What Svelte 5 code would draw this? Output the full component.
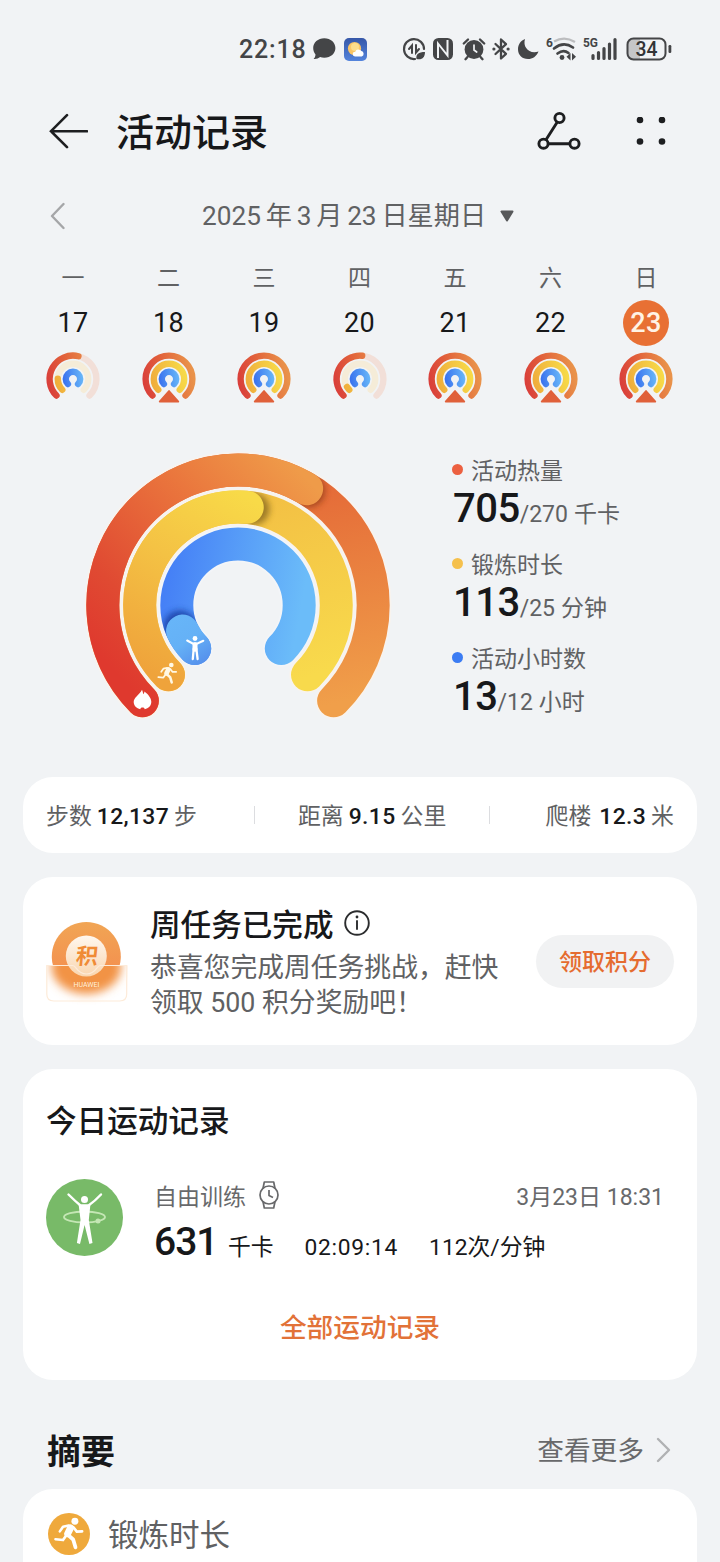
<script lang="ts">
  type Day = { label: string; date: number; heat: number; time: number; done: boolean; today?: boolean };

  const days: Day[] = [
    { label: '一', date: 17, heat: 0.55, time: 0.17, done: false },
    { label: '二', date: 18, heat: 1, time: 1, done: true },
    { label: '三', date: 19, heat: 1, time: 1, done: true },
    { label: '四', date: 20, heat: 0.52, time: 0.05, done: false },
    { label: '五', date: 21, heat: 1, time: 1, done: true },
    { label: '六', date: 22, heat: 1, time: 1, done: true },
    { label: '日', date: 23, heat: 1, time: 1, done: true, today: true }
  ];

  const goals = [
    { name: '活动热量', value: '705', target: '/270', unit: '千卡', color: '#ec6040' },
    { name: '锻炼时长', value: '113', target: '/25', unit: '分钟', color: '#f5c04c' },
    { name: '活动小时数', value: '13', target: '/12', unit: '小时', color: '#3b7cf3' }
  ];

  // 圆环从左下 45° 开始,顺时针 270°
  function arc(cx: number, cy: number, r: number, progress: number) {
    const start = (135 * Math.PI) / 180;
    const end = start + progress * 1.5 * Math.PI;
    const point = (a: number) => `${(cx + r * Math.cos(a)).toFixed(2)} ${(cy + r * Math.sin(a)).toFixed(2)}`;
    return `M${point(start)} A${r} ${r} 0 ${progress > 2 / 3 ? 1 : 0} 1 ${point(end)}`;
  }
</script>

{#snippet runner()}
  <circle cx="15.8" cy="3.6" r="2.4" fill="currentColor" />
  <path d="m12.8 8.200-2 4" stroke="currentColor" stroke-width="4.800" stroke-linecap="round" />
  <path d="m11 13 3.600 3.200 1.600 5.400" fill="none" stroke="currentColor" stroke-width="2.600" stroke-linecap="round" stroke-linejoin="round" />
  <path d="M11.500 6.600 7.600 7.400 5.400 10.600M14.800 7.800l2.300 3 3.700-.2M9.800 13.400 7.600 16.600 2.400 16" fill="none" stroke="currentColor" stroke-width="1.800" stroke-linecap="round" stroke-linejoin="round" />
{/snippet}

<main class="screen">
  <div class="status-bar">
    <span class="clock">22:18</span>
    <svg width="24" height="24" viewBox="0 0 24 24"><path d="M12.3 1.2C18.7 1.2 23.4 5.6 23.4 11S18.7 20.8 12.3 20.8c-1.6 0-3-.2-4.2-.7C6.4 21.3 4 22.5 1.6 22c1.3-1.3 1.8-3 1.9-4.6C2 15.7 1.2 13.5 1.2 11 1.2 5.6 5.9 1.2 12.3 1.2z" fill="#444547" /></svg>
    <svg class="s-weather" width="23" height="23" viewBox="0 0 23 23">
      <defs><linearGradient id="sky" x2="0" y2="1"><stop stop-color="#3657a8" /><stop offset="1" stop-color="#5484dc" /></linearGradient></defs>
      <rect width="23" height="23" rx="5" fill="url(#sky)" />
      <circle cx="10.5" cy="10.5" r="6.6" fill="#fbc667" />
      <circle cx="11" cy="9" r="4" fill="#fddd8c" />
      <path d="M11 18.5a2.4 2.4 0 0 1 .2-4.8 3.6 3.6 0 0 1 6.2-.6 2.8 2.8 0 0 1 .3 5.4z" fill="#fff" />
    </svg>
    <div class="status-right">
      <svg width="24" height="24" viewBox="0 0 24 24" fill="none" stroke="#444547" stroke-width="2.2" stroke-linecap="round">
        <path d="M13 22A10 10 0 1 1 22 12" />
        <path d="M10 16V8.5L7 12M14 8v7.500l3-3.500" stroke-width="2" />
        <path d="M14.5 22c-1-4.500 2-7 8.500-7 0 5-3 8.500-8.500 7z" fill="#444547" stroke="none" />
      </svg>
      <svg class="s-nfc" width="20" height="22" viewBox="0 0 20 22"><rect width="20" height="22" rx="5.5" fill="#444547" /><path d="M5 20V5.500l9.500 12V2" fill="none" stroke="#f1f3f5" stroke-width="2" /></svg>
      <svg class="s-alarm" width="24" height="24" viewBox="0 0 24 24" fill="none" stroke-linecap="round">
        <circle cx="12" cy="12.5" r="9.4" fill="#444547" />
        <path d="M1.800 6.500 6 2.500M22.200 6.500l-4.200-4M5.500 20 3.500 22.200M18.500 20l2 2.200" stroke="#444547" stroke-width="2.400" />
        <path d="M12 8v5l2.700 2" stroke="#f1f3f5" stroke-width="1.700" />
      </svg>
      <svg class="s-bt" width="18" height="24" viewBox="0 0 18 24">
        <path d="m3.500 7 10.500 9.800-5 4.700v-19l5 4.700L3.500 17" fill="none" stroke="#444547" stroke-width="2.3" stroke-linejoin="round" stroke-linecap="round" />
        <circle cx="1.9" cy="12" r="1.6" fill="#444547" /><circle cx="16.1" cy="12" r="1.6" fill="#444547" />
      </svg>
      <svg class="s-moon" width="22" height="22" viewBox="0 0 22 22"><path d="M8 1C5.500 9 12 16.500 21.500 13.500 19.500 18.500 15.500 21 11 21 5 21 1 16.800 1 11.200 1 6.300 4 2.500 8 1z" fill="#444547" /></svg>
      <svg class="s-wifi" width="31" height="24" viewBox="0 0 31 24">
        <text x="0" y="10" font-size="12" font-weight="700" fill="#444547">6</text>
        <path d="M8 4.500Q18.500-1.500 29 5" fill="none" stroke="#bcbdbf" stroke-width="2.3" />
        <path d="M8 11.500Q17.500 4 27 10.500M11.500 16.500q6-4.500 11-.5" fill="none" stroke="#444547" stroke-width="2.7" stroke-linecap="round" />
        <circle cx="16" cy="20.5" r="2.4" fill="#444547" />
        <path d="M24.500 16v7.500l-4-3.700zM26 16v7.500l4-3.700z" fill="#444547" />
      </svg>
      <svg class="s-cell" width="34" height="24" viewBox="0 0 34 24">
        <text x="0" y="10" font-size="13" font-weight="700" fill="#444547" textLength="15" lengthAdjust="spacingAndGlyphs">5G</text>
        <path d="M10 18.500v3M15.500 15.500v6M21 11.500v10M26.500 7v14.500M32 2.500v19" stroke="#444547" stroke-width="3.2" stroke-linecap="round" />
      </svg>
      <svg class="s-battery" width="46" height="24" viewBox="0 0 46 24">
        <path d="M7 2h7v20H7a5 5 0 0 1-5-5V7a5 5 0 0 1 5-5z" fill="#c5c6c8" />
        <rect x="1.5" y="1.5" width="38" height="21" rx="6" fill="none" stroke="#444547" stroke-width="2" />
        <rect x="42.5" y="8" width="2.8" height="8" rx="1.2" fill="#444547" />
        <text x="20.5" y="18.7" font-size="19.5" font-weight="500" fill="#333436" text-anchor="middle" textLength="22" lengthAdjust="spacingAndGlyphs">34</text>
      </svg>
    </div>
  </div>

  <header class="header">
    <button class="icon-button" aria-label="返回">
      <svg width="40" height="38" viewBox="0 0 40 38"><path d="M19 2.200 3 18.200l16 16M3 18.200H39" fill="none" stroke="#1d1e20" stroke-width="2.6" stroke-linecap="round" /></svg>
    </button>
    <h1>活动记录</h1>
    <button class="icon-button share" aria-label="分享">
      <svg width="44" height="42" viewBox="0 0 44 42" fill="none" stroke="#1d1e20" stroke-width="2.9"><circle cx="22.5" cy="7" r="4.6" /><circle cx="6.5" cy="32.7" r="4.6" /><circle cx="37.5" cy="32.7" r="4.6" /><path d="M20 11.500 9 28.700M11.500 32.700H33" /></svg>
    </button>
    <button class="icon-button" aria-label="更多">
      <svg width="30" height="30" viewBox="0 0 30 30" fill="#1d1e20"><circle cx="4" cy="3" r="3.3" /><circle cx="26" cy="3" r="3.3" /><circle cx="4" cy="24.5" r="3.3" /><circle cx="26" cy="24.5" r="3.3" /></svg>
    </button>
  </header>

  <div class="date-row">
    <svg width="16" height="28" viewBox="0 0 16 28"><path d="M14.500 2 3 14l11.500 12" fill="none" stroke="#a5a6a8" stroke-width="2.4" stroke-linecap="round" stroke-linejoin="round" /></svg>
    <span class="date">2025 年 3 月 23 日星期日</span>
    <svg class="caret" width="16" height="13" viewBox="0 0 16 13"><path d="M2.500 1.500h11L8 10.500z" fill="#58595b" stroke="#58595b" stroke-width="2" stroke-linejoin="round" /></svg>
  </div>

  <div class="week">
    {#each days as day}
      <div class="day">
        <span class="day-label">{day.label}</span>
        <span class="day-date" class:today={day.today}>{day.date}</span>
        <svg width="56" height="54" viewBox="0 0 56 54" fill="none" stroke-linecap="round">
          <g stroke-width="6.4">
            {#if !day.done}
              <path d={arc(28, 28, 23.4, 1)} stroke="#f2dfd8" />
              <path d={arc(28, 28, 15.2, 1)} stroke="#f5ecd8" />
            {/if}
            <path d={arc(28, 28, 23.4, day.heat)} stroke="url(#miniHeat)" />
            <path d={arc(28, 28, 15.2, day.time)} stroke="url(#miniTime)" />
            <path d={arc(28, 28, 7.2, 1)} stroke="url(#miniHour)" />
          </g>
          {#if day.done}
            <path d="M28 41 38 50.500H18z" fill="#f1f3f5" stroke="#f1f3f5" stroke-width="5" stroke-linejoin="round" />
            <path d="M28 40 37.300 50.500H18.700z" fill="#e0603a" stroke="#e0603a" stroke-width="1.8" stroke-linejoin="round" />
          {/if}
        </svg>
      </div>
    {/each}
  </div>

  <section class="activity">
    <svg class="rings" width="310" height="274" viewBox="0 0 310 274" fill="none" stroke-linecap="round">
      <defs>
        <linearGradient id="miniHeat" gradientUnits="userSpaceOnUse" x1="2" y1="46" x2="54" y2="34"><stop stop-color="#d8393a" /><stop offset=".5" stop-color="#e2633b" /><stop offset="1" stop-color="#e9924a" /></linearGradient>
        <linearGradient id="miniTime" gradientUnits="userSpaceOnUse" x1="10" y1="38" x2="46" y2="30"><stop stop-color="#efaa3b" /><stop offset="1" stop-color="#f7da48" /></linearGradient>
        <linearGradient id="miniHour" gradientUnits="userSpaceOnUse" x1="18" y1="30" x2="38" y2="28"><stop stop-color="#3971ee" /><stop offset="1" stop-color="#67b6f8" /></linearGradient>
        <linearGradient id="heatBase" gradientUnits="userSpaceOnUse" x1="225" y1="40" x2="270" y2="250"><stop stop-color="#e56b38" /><stop offset="1" stop-color="#f09f4a" /></linearGradient>
        <linearGradient id="heatTop" gradientUnits="userSpaceOnUse" x1="40" y1="230" x2="235" y2="40"><stop stop-color="#df392e" /><stop offset=".22" stop-color="#e04a32" /><stop offset=".65" stop-color="#ea763d" /><stop offset="1" stop-color="#ef9b49" /></linearGradient>
        <linearGradient id="timeBase" gradientUnits="userSpaceOnUse" x1="180" y1="50" x2="245" y2="220"><stop stop-color="#f3c044" /><stop offset="1" stop-color="#f8da4c" /></linearGradient>
        <linearGradient id="timeTop" gradientUnits="userSpaceOnUse" x1="80" y1="230" x2="180" y2="55"><stop stop-color="#efa33b" /><stop offset=".55" stop-color="#f4c244" /><stop offset="1" stop-color="#f8da48" /></linearGradient>
        <linearGradient id="hourBase" gradientUnits="userSpaceOnUse" x1="80" y1="150" x2="215" y2="175"><stop stop-color="#4580f6" /><stop offset="1" stop-color="#6bbcf9" /></linearGradient>
        <linearGradient id="hourTop" gradientUnits="userSpaceOnUse" x1="95" y1="165" x2="125" y2="210"><stop stop-color="#67b5f8" /><stop offset=".5" stop-color="#65b1f6" /><stop offset="1" stop-color="#5590ec" /></linearGradient>
        <filter id="shade" x="-50%" y="-50%" width="200%" height="200%"><feGaussianBlur stdDeviation="3" /></filter>
        <mask id="heatMask" maskUnits="userSpaceOnUse" x="0" y="0" width="310" height="274"><path d={arc(155, 155.2, 135.2, 1)} stroke="#fff" stroke-width="33" /></mask>
        <mask id="timeMask" maskUnits="userSpaceOnUse" x="0" y="0" width="310" height="274"><path d={arc(155, 155.2, 98.3, 1)} stroke="#fff" stroke-width="33" /></mask>
        <mask id="hourMask" maskUnits="userSpaceOnUse" x="0" y="0" width="310" height="274"><path d={arc(155, 155.2, 61.2, 1)} stroke="#fff" stroke-width="33" /></mask>
      </defs>
      <g stroke="#f8f3ee" stroke-width="36.5">
        <path d={arc(155, 155.2, 135.2, 1)} />
        <path d={arc(155, 155.2, 98.3, 1)} />
        <path d={arc(155, 155.2, 61.2, 1)} stroke="#f3f5f8" />
      </g>
      <g stroke-width="33">
        <path d={arc(155, 155.2, 135.2, 1)} stroke="url(#heatBase)" />
        <g mask="url(#heatMask)"><circle cx="226" cy="41" r="16" fill="#8e3a18" opacity=".75" filter="url(#shade)" /></g>
        <path d={arc(155, 155.2, 135.2, 0.613)} stroke="url(#heatTop)" />
        <path d={arc(155, 155.2, 98.3, 1)} stroke="url(#timeBase)" />
        <g mask="url(#timeMask)"><circle cx="170.5" cy="59" r="16" fill="#80641c" opacity=".75" filter="url(#shade)" /></g>
        <path d={arc(155, 155.2, 98.3, 0.52)} stroke="url(#timeTop)" />
        <path d={arc(155, 155.2, 61.2, 1)} stroke="url(#hourBase)" />
        <g mask="url(#hourMask)"><circle cx="97" cy="177" r="16.5" fill="#173b9c" opacity=".8" filter="url(#shade)" /></g>
        <path d={arc(155, 155.2, 61.2, 0.074)} stroke="url(#hourTop)" />
      </g>
      <path d="M59 239.700c1 2.300 1 3.300 1.200 4.600.8-.8 1.200-1.800 1.300-2.800 3.800 3 6.800 6.600 6.800 10.300 0 4-2.800 6.700-6.600 7.500-.1-1-.9-1.700-2.200-1.700s-2.100.7-2.200 1.700c-3.700-.8-6.600-3.500-6.600-7.200 0-4.800 5.500-7 8.300-12.400z" fill="#fff" />
      <g transform="translate(73 211.500) scale(.97)" color="#fff8e4">{@render runner()}</g>
      <g stroke="#fff" fill="#fff" transform="translate(0 -1)">
        <circle cx="112" cy="189.500" r="2.400" stroke="none" />
        <path d="M104.200 191.500 110 194.600h4l6.300-2.800" stroke-width="2.100" fill="none" />
        <path d="M112 195.800v4.500" stroke-width="5" />
        <path d="M110.700 199.500 109.800 210M113.300 199.500l1.300 10.500" stroke-width="2.300" />
      </g>
    </svg>

    <div class="goals">
      {#each goals as goal}
        <div class="goal">
          <div class="goal-name"><i style="background: {goal.color}"></i>{goal.name}</div>
          <div class="goal-value"><b>{goal.value}</b><span class="target">{goal.target}</span><span class="unit">{goal.unit}</span></div>
        </div>
      {/each}
    </div>
  </section>

  <section class="card stats">
    <span class="stat">步数<b>12,137</b>步</span>
    <i></i>
    <span class="stat">距离<b>9.15</b>公里</span>
    <i></i>
    <span class="stat last">爬楼<b>12.3</b>米</span>
  </section>

  <section class="card task">
    <svg class="badge" width="82" height="92" viewBox="0 0 82 92">
      <defs>
        <linearGradient id="medal" x2="0" y2="1"><stop stop-color="#f1a554" /><stop offset="1" stop-color="#f39350" /></linearGradient>
        <linearGradient id="core" x2="0" y2="1"><stop stop-color="#fff7ee" /><stop offset="1" stop-color="#f9d6b0" /></linearGradient>
        <filter id="soft" x="-30%" y="-30%" width="160%" height="160%"><feGaussianBlur stdDeviation="5" /></filter>
        <clipPath id="pocket"><rect x="0" y="44.500" width="82" height="47" /></clipPath>
      </defs>
      <path d="M7 44.500A34.500 34.500 0 1 1 73.600 44.500z" fill="url(#medal)" />
      <g clip-path="url(#pocket)"><ellipse cx="40.3" cy="46" rx="35" ry="27" fill="#f29345" filter="url(#soft)" /></g>
      <circle cx="40.3" cy="35" r="20.5" fill="url(#core)" />
      <path d="M.8 44.500h26c3.500 0 4 8.500 13.700 8.500s10.200-8.500 13.700-8.500h26.500V73q0 7-7 7H7.800q-7 0-7-7z" fill="none" stroke="#fdebd9" stroke-width="1.200" />
      <text transform="translate(40.300 43) skewX(-6)" font-size="22" font-weight="700" fill="#f08b35" text-anchor="middle">积</text>
      <text x="40.5" y="66" font-size="7" fill="#fff1df" text-anchor="middle" textLength="26">HUAWEI</text>
    </svg>
    <div class="task-text">
      <h2>周任务已完成
        <svg width="28" height="28" viewBox="0 0 28 28" fill="none" stroke="#2b2c2e" stroke-width="1.9"><circle cx="14" cy="14" r="11.8" /><path d="M14 12v8" stroke-linecap="round" /><circle cx="14" cy="8" r="1.4" fill="#2b2c2e" stroke="none" /></svg>
      </h2>
      <p>恭喜您完成周任务挑战，赶快<br />领取 500 积分奖励吧！</p>
    </div>
    <button class="claim">领取积分</button>
  </section>

  <section class="card records">
    <h2>今日运动记录</h2>
    <div class="record">
      <svg width="77" height="77" viewBox="0 0 77 77">
        <circle cx="38.5" cy="38.5" r="38.5" fill="#78ba68" />
        <ellipse cx="38.5" cy="38" rx="20.5" ry="5.5" fill="none" stroke="#c4e6b4" stroke-width="1.9" />
        <circle cx="38.5" cy="20.5" r="3.5" fill="#fff" />
        <path d="M22.500 15.500Q29 22 34.500 26.500h8Q49 22 55 15.500" fill="none" stroke="#fff" stroke-width="2.4" stroke-linecap="round" />
        <path d="M32.500 24.500Q38.500 29 44.500 24.500L42.800 41 46.500 64 43.400 65 38.600 46 34 65 30.900 64 34.500 41z" fill="#fff" />
        <circle cx="52" cy="42" r="2.5" fill="#c4e6b4" />
      </svg>
      <div class="record-body">
        <div class="record-top">
          <span>自由训练</span>
          <svg width="22" height="30" viewBox="0 0 22 30" fill="none" stroke="#68696b" stroke-width="1.7" stroke-linejoin="round"><circle cx="11" cy="15" r="9" /><path d="M5 8.500 6.300 2h9.400L17 8.500M5 21.500 6.300 28h9.400L17 21.500M11 10v5.500l4 2" /></svg>
          <time>3月23日 18:31</time>
        </div>
        <div class="record-data"><b>631</b><span class="kcal">千卡</span><span class="duration">02:09:14</span><span class="rate">112次/分钟</span></div>
      </div>
    </div>
    <button class="all">全部运动记录</button>
  </section>

  <div class="summary-head">
    <h2>摘要</h2>
    <span class="more">查看更多</span>
    <svg width="16" height="28" viewBox="0 0 16 28"><path d="M3 4 14 15 3 26" fill="none" stroke="#b0b1b3" stroke-width="2.4" stroke-linecap="round" stroke-linejoin="round" /></svg>
  </div>

  <section class="card summary">
    <svg width="42" height="42" viewBox="0 0 42 42"><circle cx="21" cy="21" r="21" fill="#efa93c" /><g transform="translate(4 3) scale(1.450)" color="#fff">{@render runner()}</g></svg>
    <span>锻炼时长</span>
  </section>
</main>

<style>
  :global(body) {
    margin: 0;
    background: #f1f3f5;
  }

  .screen {
    box-sizing: border-box;
    width: 720px;
    height: 1562px;
    overflow: hidden;
    background: #f1f3f5;
    color: #17181a;
    font-family: Roboto, "Noto Sans CJK SC", sans-serif;
  }

  svg {
    display: block;
    flex: none;
  }

  button {
    padding: 0;
    border: none;
    background: none;
    font-family: inherit;
  }

  h1, h2, p {
    margin: 0;
  }

  .status-bar {
    display: flex;
    align-items: center;
    box-sizing: border-box;
    height: 99px;
    padding: 0 48px 1px 239px;
    color: #444547;
  }

  .clock {
    width: 73px;
    font-size: 25px;
    font-weight: 500;
    letter-spacing: 0.8px;
    white-space: nowrap;
  }

  .s-weather {
    margin-left: 8px;
  }

  .status-right {
    display: flex;
    align-items: center;
    margin-left: auto;
  }

  .s-nfc, .s-moon, .s-wifi {
    margin-left: 7px;
  }

  .s-bt, .s-cell {
    margin-left: 6px;
  }

  .s-alarm, .s-battery {
    margin-left: 9px;
  }

  .header {
    display: flex;
    align-items: center;
    height: 66px;
    padding: 0 54px 0 48px;
  }

  .header h1 {
    margin: 0 auto 0 28px;
    padding-top: 2px;
    font-size: 38px;
    font-weight: 500;
    line-height: 64px;
  }

  .share {
    margin-right: 55px;
  }

  .date-row {
    display: flex;
    align-items: center;
    height: 62px;
    margin-top: 20px;
    padding-left: 49px;
    color: #606163;
  }

  .date {
    margin-left: 137px;
    padding-bottom: 4px;
    font-size: 26.2px;
    word-spacing: -1.7px;
    white-space: nowrap;
  }

  .caret {
    margin-left: 13px;
  }

  .week {
    display: flex;
    justify-content: space-between;
    margin-top: 11px;
    padding: 0 26.5px 0 25.5px;
  }

  .day {
    display: flex;
    flex-direction: column;
    align-items: center;
    width: 95px;
  }

  .day-label {
    height: 42px;
    color: #606163;
    font-size: 23px;
    line-height: 42px;
  }

  .day-date {
    width: 46px;
    height: 46px;
    border-radius: 50%;
    font-size: 27px;
    letter-spacing: 0.3px;
    line-height: 47px;
    text-align: center;
  }

  .day-date.today {
    background: #e87034;
    color: #fff3e5;
    font-weight: 500;
  }

  .day svg {
    margin-top: 5px;
  }

  .activity {
    display: flex;
    height: 327px;
    margin-top: 45px;
  }

  .rings {
    margin-left: 83px;
  }

  .goals {
    padding: 3px 0 0 59px;
  }

  .goal {
    height: 94px;
  }

  .goal-name {
    display: flex;
    align-items: center;
    height: 32px;
    color: #606163;
    font-size: 23px;
  }

  .goal-name i {
    width: 11px;
    height: 11px;
    margin-right: 8px;
    border-radius: 50%;
  }

  .goal-value {
    display: flex;
    align-items: baseline;
    height: 44px;
    line-height: 47px;
    color: #606163;
  }

  .goal-value b {
    margin-left: 1px;
    font-size: 40px;
    font-weight: 500;
    letter-spacing: -0.5px;
    color: #17181a;
  }

  .target {
    font-size: 23px;
  }

  .unit {
    margin-left: 6px;
    font-size: 23px;
  }

  .card {
    box-sizing: border-box;
    margin: 0 23px;
    border-radius: 30px;
    background: #fff;
  }

  .stats {
    display: flex;
    align-items: center;
    height: 76px;
    padding: 0 23px;
  }

  .stats i {
    width: 1px;
    height: 18px;
    margin: 0 43px 0 57px;
    background: #dcdde0;
  }

  .stats i + .stat + i {
    margin: 0 0 0 43px;
  }

  .stat {
    padding-bottom: 2px;
    color: #606163;
    font-size: 22.9px;
    white-space: nowrap;
  }

  .stat.last {
    margin-left: auto;
  }

  .stat b {
    margin: 0 5px;
    font-weight: 500;
    letter-spacing: 0.35px;
    color: #17181a;
  }

  .stat.last b {
    margin-left: 8px;
  }

  .task {
    display: flex;
    align-items: center;
    height: 168px;
    margin-top: 24px;
    padding: 0 23px;
  }

  .badge {
    margin-top: 11px;
  }

  .task-text {
    margin-left: 22px;
    white-space: nowrap;
  }

  .task-text h2 {
    display: flex;
    align-items: center;
    gap: 9px;
    height: 36px;
    font-size: 30.6px;
    font-weight: 500;
  }

  .task-text p {
    margin: 10px 0 -3px;
    color: #606163;
    font-size: 26.8px;
    line-height: 35px;
  }

  .claim {
    width: 138px;
    height: 53px;
    margin-left: auto;
    padding-bottom: 2px;
    border-radius: 27px;
    background: #f1f2f3;
    color: #e56c30;
    font-size: 23px;
    font-weight: 500;
  }

  .records {
    height: 311px;
    margin-top: 24px;
    padding: 31px 23px 0;
  }

  .records h2 {
    height: 44px;
    font-size: 30.6px;
    font-weight: 500;
    line-height: 44px;
  }

  .record {
    display: flex;
    margin-top: 35px;
  }

  .record-body {
    flex: 1;
    margin-left: 31px;
  }

  .record-top {
    display: flex;
    align-items: center;
    height: 31px;
    padding-right: 10px;
    color: #68696b;
    font-size: 23px;
  }

  .record-top svg {
    margin-left: 12px;
  }

  .record-top time {
    margin-left: auto;
    font-size: 23px;
  }

  .record-data {
    display: flex;
    align-items: baseline;
    height: 51px;
    font-size: 22.8px;
    line-height: 64px;
    white-space: nowrap;
  }

  .record-data b {
    width: 63px;
    font-size: 39px;
    font-weight: 500;
    letter-spacing: -1px;
  }

  .kcal {
    margin-left: 11px;
  }

  .duration {
    margin-left: 31px;
    letter-spacing: 0.7px;
  }

  .rate {
    margin-left: 31px;
  }

  .all {
    display: block;
    margin: 48px auto 0;
    color: #e27238;
    font-size: 26.7px;
    font-weight: 500;
    line-height: 38px;
  }

  .summary-head {
    display: flex;
    align-items: center;
    height: 109px;
    padding: 29px 49px 0 47px;
    box-sizing: border-box;
  }

  .summary-head h2 {
    margin-right: auto;
    font-size: 34px;
    font-weight: 700;
  }

  .more {
    margin-right: 11px;
    padding-bottom: 2px;
    color: #68696b;
    font-size: 26.7px;
  }

  .summary {
    display: flex;
    align-items: center;
    height: 120px;
    padding: 0 25px 30px;
  }

  .summary span {
    margin-left: 18px;
    padding-bottom: 3px;
    color: #606163;
    font-size: 30.5px;
  }
</style>
